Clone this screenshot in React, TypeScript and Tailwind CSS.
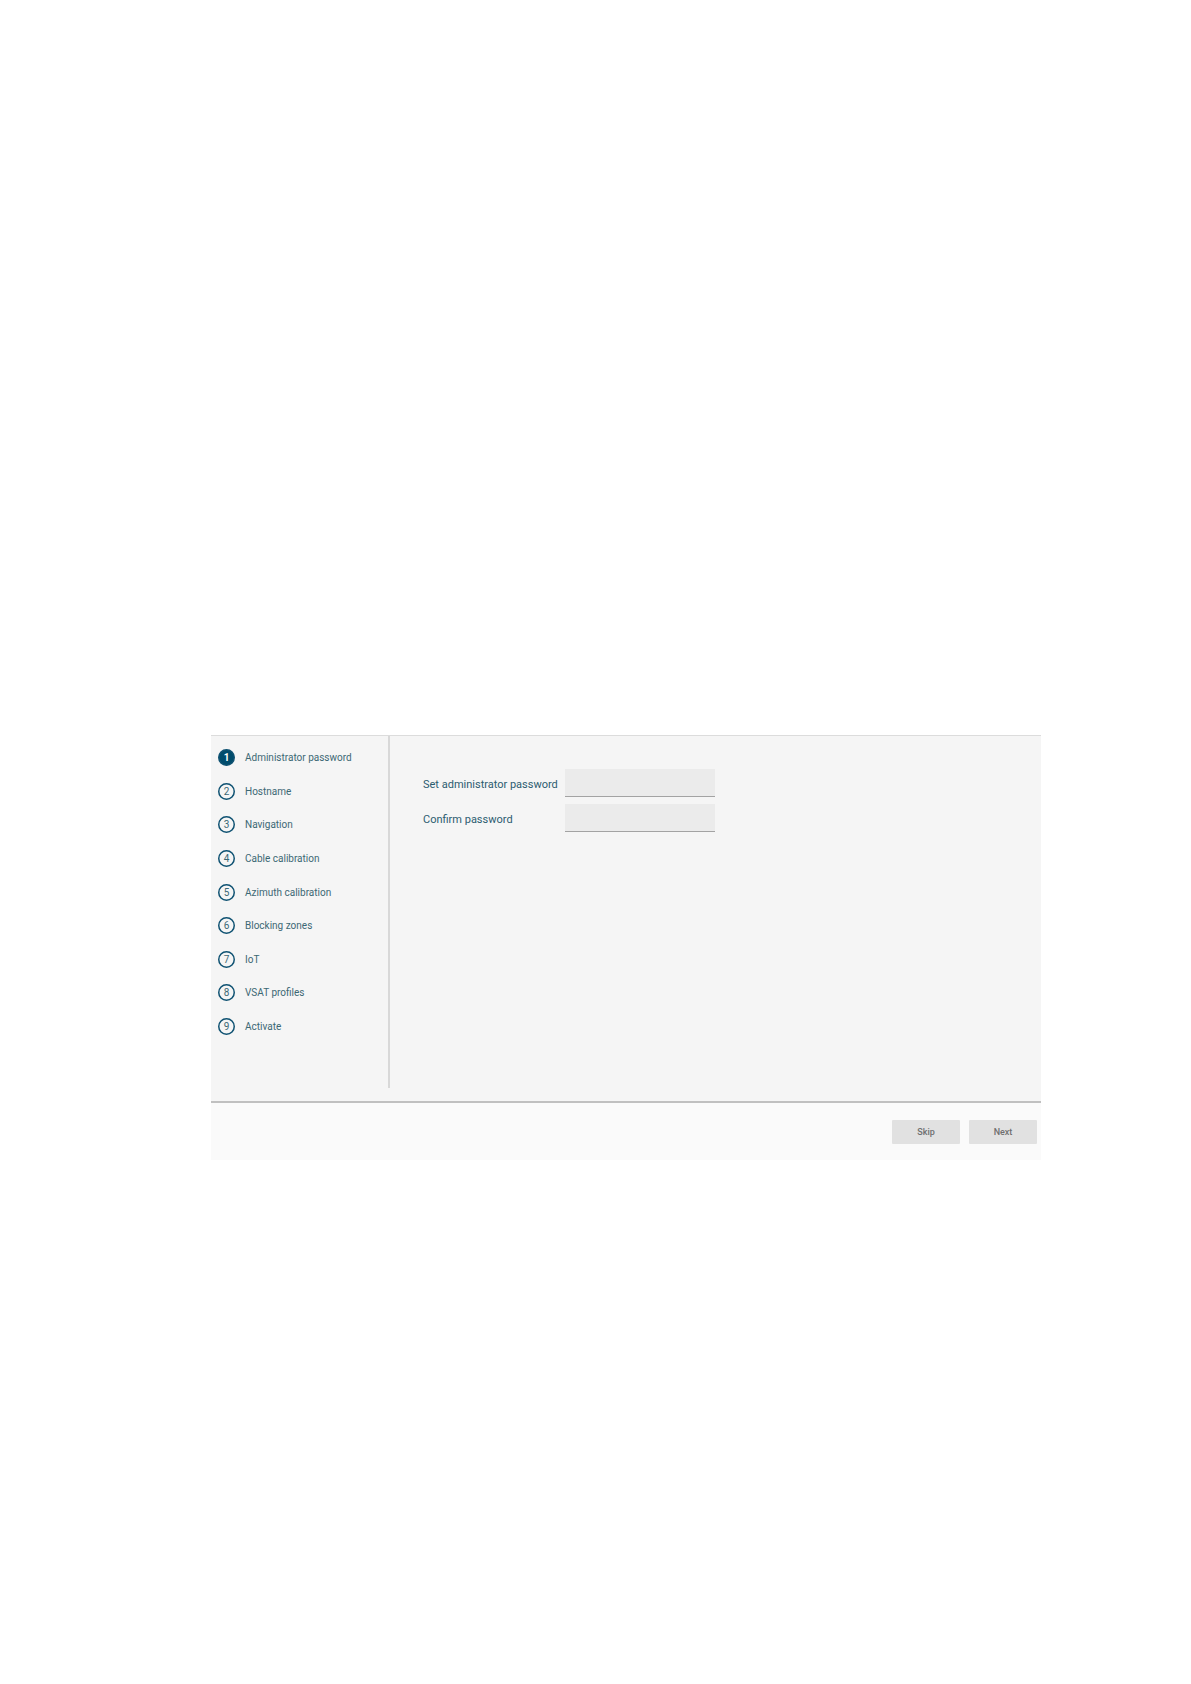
import { useState } from 'react';
import clsx from 'clsx';

const steps = [
  'Administrator password',
  'Hostname',
  'Navigation',
  'Cable calibration',
  'Azimuth calibration',
  'Blocking zones',
  'IoT',
  'VSAT profiles',
  'Activate',
];

const StepList: React.FC<{ current: number }> = ({ current }) => {
  return (
    <nav aria-label="Setup steps" className="w-[179px] shrink-0 border-r-2 border-[#d8d8d8] pt-[13px] pb-[53px] pl-[7px]">
      <ol className="flex h-[286px] flex-col justify-between">
        {steps.map((name, idx) => (
          <li
            key={name}
            aria-current={idx === current ? 'step' : undefined}
            className="flex items-center gap-[10px] text-[10px] leading-[17px] text-[#3c6874]"
          >
            <span className="relative size-[17px] text-center">
              <svg viewBox="0 0 17 17" className="absolute inset-0 size-full" aria-hidden="true">
                <circle
                  cx="8.5"
                  cy="8.5"
                  r="7.75"
                  strokeWidth="1.5"
                  className={clsx('stroke-[#0f5272]', idx === current ? 'fill-[#004c6c]' : 'fill-none')}
                />
              </svg>
              <span className={clsx('relative', idx === current && 'font-bold text-white')}>{idx + 1}</span>
            </span>
            <span>{name}</span>
          </li>
        ))}
      </ol>
    </nav>
  );
};

type FieldProps = {
  id: string;
  label: string;
  value: string;
  onChange: (value: string) => void;
};

const PasswordField: React.FC<FieldProps> = ({ id, label, value, onChange }) => {
  return (
    <div className="flex items-center">
      <label htmlFor={id} className="w-[142px] pt-[3px] text-[11px] leading-4 text-[#2c5c70]">
        {label}
      </label>
      <input
        id={id}
        type="password"
        value={value}
        onChange={(e) => onChange(e.target.value)}
        className="h-7 w-[150px] border-b border-[#a3a3a3] bg-[#ebebeb] px-2 text-[11px] text-[#1f5468] outline-none"
      />
    </div>
  );
};

const buttonClass = 'h-6 w-[68px] rounded-[1px] bg-[#e1e1e1] text-[9px] leading-4 font-medium text-[#6f6f6f]';

export default function App() {
  const [current, setCurrent] = useState(0);
  const [password, setPassword] = useState('');
  const [confirm, setConfirm] = useState('');

  const goNext = () => setCurrent(Math.min(current + 1, steps.length - 1));

  return (
    <div className="min-h-screen bg-white pt-[735px] pr-[150px] pl-[211px] font-[Roboto,sans-serif]">
      <main className="border-t border-[#dcdcdc] bg-[#f5f5f5]">
        <div className="flex pb-[13px]">
          <StepList current={current} />
          <form className="flex flex-col gap-[7px] pt-[33px] pl-[33px]">
            <PasswordField id="password" label="Set administrator password" value={password} onChange={setPassword} />
            <PasswordField id="confirm" label="Confirm password" value={confirm} onChange={setConfirm} />
          </form>
        </div>
        <footer className="flex justify-end gap-[9px] border-t-2 border-[#c0c0c0] bg-[#fafafa] pt-[17px] pr-1 pb-4">
          <button type="button" className={buttonClass} onClick={goNext}>
            Skip
          </button>
          <button type="button" className={buttonClass} onClick={goNext}>
            Next
          </button>
        </footer>
      </main>
    </div>
  );
}
